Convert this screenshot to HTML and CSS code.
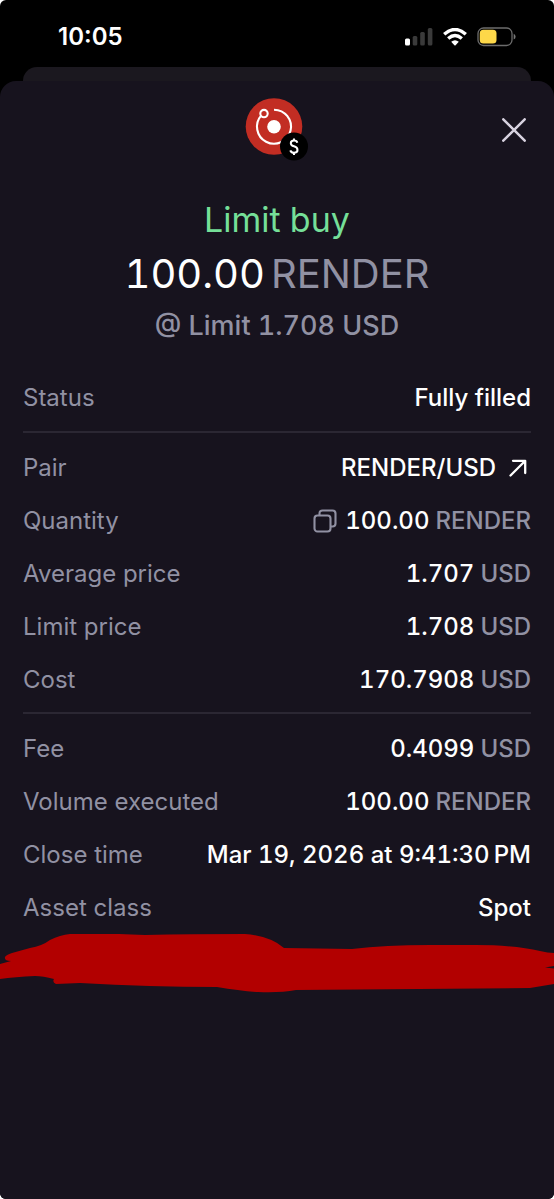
FILE: index.html
```html
<!DOCTYPE html>
<html lang="en">
<head>
<meta charset="utf-8">
<meta name="viewport" content="width=device-width, initial-scale=1">
<title>Limit buy</title>
<link rel="stylesheet" href="styles.css">
</head>
<body>
<div class="screen">
  <header class="status-bar">
    <time class="clock">10:05</time>
    <div class="indicators">
      <svg class="signal" width="28" height="18" viewBox="0 0 28 18" aria-hidden="true">
        <rect x="0" y="10.500" width="5" height="7" rx="1.500" fill="#fff"/>
        <rect x="7.700" y="8" width="4.600" height="9.500" rx="1.500" fill="#3a3a3a"/>
        <rect x="15.200" y="4" width="4.600" height="13.500" rx="1.500" fill="#3a3a3a"/>
        <rect x="22.800" y="0" width="4.600" height="17.500" rx="1.500" fill="#3a3a3a"/>
      </svg>
      <svg class="wifi" width="24" height="18" viewBox="0 0 24 18" aria-hidden="true">
        <g fill="none" stroke="#fff" stroke-width="3.400">
          <path d="M1.200 6.300Q12-3.300 22.800 6.300"/>
          <path d="M5.200 10.600Q12 4.600 18.800 10.600"/>
        </g>
        <path d="M8.200 13.800Q12 10.600 15.800 13.800L12.600 17.200Q12 17.700 11.400 17.200Z" fill="#fff"/>
      </svg>
      <svg class="battery" width="39" height="20" viewBox="0 0 39 20" aria-hidden="true">
        <rect x="1" y="1" width="34" height="17.500" rx="5.500" fill="none" stroke="#6c6c6c" stroke-width="1.300"/>
        <rect x="2.800" y="2.800" width="16.700" height="13.800" rx="3.600" fill="#fdd849"/>
        <path d="M36.700 6.800Q38.600 7.700 38.600 9.700T36.700 12.600Z" fill="#777"/>
      </svg>
    </div>
  </header>
  <div class="sheet-behind"></div>
  <main class="sheet">
    <div class="sheet-top">
      <svg class="asset-logo" width="64" height="64" viewBox="0 0 64 64" role="img" aria-label="Render">
        <circle cx="29" cy="28.500" r="28.300" fill="#c22d23"/>
        <circle cx="29" cy="28.700" r="6.800" fill="#fff"/>
        <path d="M29 11.700A17 17 0 1 1 16.300 17.400" fill="none" stroke="#fff" stroke-width="2.100"/>
        <circle cx="19" cy="15.600" r="3.700" fill="#c22d23" stroke="#fff" stroke-width="2.100"/>
        <circle cx="49" cy="48.500" r="14" fill="#000"/>
        <path d="M52.300 44.700Q51.700 42.600 49 42.600Q45.800 42.600 45.800 45.200Q45.800 47.400 49 48.300Q52.500 49.300 52.500 52Q52.500 54.800 49 54.800Q46 54.800 45.300 52.400M49 40.500V43M49 54.500V57" fill="none" stroke="#fff" stroke-width="2"/>
      </svg>
      <button class="close" type="button" aria-label="Close">
        <svg width="24" height="24" viewBox="0 0 24 24" aria-hidden="true">
          <path d="M1.300 1.300L22.700 22.700M22.700 1.300L1.300 22.700" fill="none" stroke="#d7d2df" stroke-width="2.500" stroke-linecap="round"/>
        </svg>
      </button>
    </div>
    <section class="summary">
      <h1 class="side">Limit buy</h1>
      <p class="amount"><span>100.00</span><span class="unit">RENDER</span></p>
      <p class="limit">@ Limit 1.708 USD</p>
    </section>
    <dl class="group">
      <div class="row"><dt>Status</dt><dd>Fully filled</dd></div>
    </dl>
    <dl class="group">
      <div class="row"><dt>Pair</dt><dd><a class="pair" href="#pair">RENDER/USD
        <svg width="18" height="18" viewBox="0 0 18 18" aria-hidden="true"><path d="M1.500 16.500L16 2M4 1.800H16.200V14" fill="none" stroke="currentColor" stroke-width="2.300" stroke-linecap="round" stroke-linejoin="round"/></svg></a></dd></div>
      <div class="row"><dt>Quantity</dt><dd>
        <button class="copy" type="button" aria-label="Copy quantity">
          <svg width="24" height="24" viewBox="0 0 24 24" aria-hidden="true"><g fill="none" stroke="currentColor" stroke-width="2.100"><rect x="1.500" y="6.500" width="16" height="16" rx="3"/><path d="M6.500 6.500V4.500Q6.500 1.500 9.500 1.500H19.500Q22.500 1.500 22.500 4.500V14.500Q22.500 17.500 19.500 17.500H17.500"/></g></svg>
        </button><span>100.00</span><span class="unit">RENDER</span></dd></div>
      <div class="row"><dt>Average price</dt><dd><span>1.707</span><span class="unit">USD</span></dd></div>
      <div class="row"><dt>Limit price</dt><dd><span>1.708</span><span class="unit">USD</span></dd></div>
      <div class="row"><dt>Cost</dt><dd><span>170.7908</span><span class="unit">USD</span></dd></div>
    </dl>
    <dl class="group">
      <div class="row"><dt>Fee</dt><dd><span>0.4099</span><span class="unit">USD</span></dd></div>
      <div class="row"><dt>Volume executed</dt><dd><span>100.00</span><span class="unit">RENDER</span></dd></div>
      <div class="row"><dt>Close time</dt><dd>Mar 19, 2026 at 9:41:30&#8239;PM</dd></div>
      <div class="row"><dt>Asset class</dt><dd>Spot</dd></div>
    </dl>
    <svg class="scribble" viewBox="0 0 554 60" preserveAspectRatio="none" aria-hidden="true">
      <path d="M0 30L11 27Q4 27 5 23Q6 21 12 19L30 14Q42 12 50 6Q60 1 70 0Q105-1 145 1Q190 0 245 0Q270 2 284 14L352 15Q385 11 430 11H475Q515 11 540 17Q548 19 554 19V32L545 33.500L554 34.500V50L530 54L296 56Q280 59 258 58Q240 57 217 53Q150 53 80 49L56 50Q52 48 54 45Q43 42 35 42Q15 43 0 45Z" fill="#b20000"/>
    </svg>
  </main>
</div>
</body>
</html>
```
FILE: styles.css
```css
* { box-sizing: border-box; }
html { background: #fff; }
body {
  margin: 0;
  font-family: Inter, "Liberation Sans", sans-serif;
  color: #fff;
}
h1, p, dl, dd { margin: 0; }
button { padding: 0; border: 0; background: none; color: inherit; }
svg { display: block; flex: none; }

.screen {
  display: flex;
  flex-direction: column;
  min-height: 100vh;
  background: #000;
  border-radius: 6px;
  overflow: hidden;
}
.status-bar {
  display: flex;
  align-items: center;
  justify-content: space-between;
  height: 67px;
  padding: 6px 38px 0 58px;
}
.clock { font-size: 24px; font-weight: 600; line-height: 32px; }
.indicators { display: flex; align-items: center; gap: 10px; }
.sheet-behind {
  height: 14px;
  margin: 0 23px;
  background: #1b181f;
  border-radius: 14px 14px 0 0;
}
.sheet {
  flex: 1;
  background: #17131e;
  border-radius: 16px 16px 0 0;
}
.sheet-top {
  display: grid;
  grid-template-columns: 1fr 64px 1fr;
  align-items: center;
  padding: 17px 28px 0;
}
.asset-logo { grid-column: 2; }
.close { justify-self: end; }

.summary {
  padding: 36px 23px 25px;
  text-align: center;
  font-variant-numeric: tabular-nums;
}
.side {
  font-size: 34px;
  font-weight: 400;
  line-height: 44px;
  color: #75df98;
}
.amount {
  display: flex;
  justify-content: center;
  gap: 6px;
  font-size: 40px;
  line-height: 64px;
}
.unit { color: #9191a3; }
.limit {
  font-size: 27px;
  font-weight: 500;
  line-height: 40px;
  color: #9191a3;
}

.group { margin: 0 23px; }
.group + .group {
  margin-top: 6px;
  padding-top: 8px;
  border-top: 2px solid #2b2733;
}
.group:first-of-type { padding-bottom: 1px; }
.row {
  display: flex;
  align-items: center;
  justify-content: space-between;
  height: 53px;
  font-size: 24px;
  line-height: 32px;
  white-space: nowrap;
}
.row dt { color: #9191a3; }
.row dd {
  display: flex;
  align-items: center;
  gap: 6px;
  font-weight: 500;
  font-variant-numeric: tabular-nums;
}
.pair {
  display: flex;
  align-items: center;
  gap: 13px;
  padding-right: 4px;
  color: inherit;
  text-decoration: none;
}
.copy { margin-right: 2px; color: #9191a3; }
.scribble { width: 100%; height: 60px; }
```
